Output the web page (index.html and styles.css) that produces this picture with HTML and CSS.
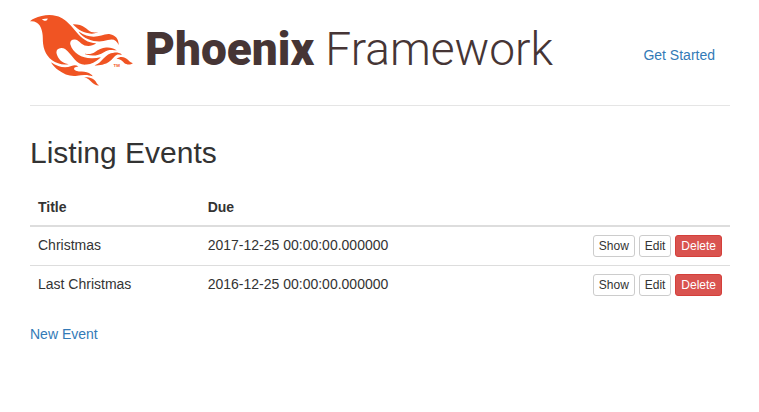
FILE: index.html
```html
<!DOCTYPE html>
<html lang="en">
<head>
<meta charset="utf-8">
<meta name="viewport" content="width=device-width, initial-scale=1">
<title>Events</title>
<link rel="stylesheet" href="styles.css">
</head>
<body>
<div class="container">
  <header class="header">
    <div class="logo">
      <svg class="bird" viewBox="0 0 71 49" aria-hidden="true">
        <path d="m26.371 33.477-.552-.1c-3.92-.729-6.397-3.1-7.57-6.829-.733-2.324.597-4.035 3.035-4.148 1.995-.092 3.362 1.055 4.57 2.39 1.557 1.72 2.984 3.558 4.514 5.305 2.202 2.515 4.797 4.134 8.347 3.634 3.183-.448 5.958-1.725 8.371-3.828.363-.316.761-.592 1.144-.886l-.241-.284c-2.027.63-4.093.841-6.205.735-3.195-.16-6.24-.828-8.964-2.582-2.486-1.601-4.319-3.746-5.19-6.611-.704-2.315.736-3.934 3.135-3.6.948.133 1.746.56 2.463 1.165.583.493 1.143 1.015 1.738 1.493 2.8 2.25 6.712 2.375 10.265-.068-5.842-.026-9.817-3.24-13.308-7.313-1.366-1.594-2.7-3.216-4.095-4.785-2.698-3.036-5.692-5.71-9.79-6.623C12.8-.623 7.745.14 2.893 2.361 1.926 2.804.997 3.319 0 4.149c.494 0 .763.006 1.032 0 2.446-.064 4.28 1.023 5.602 3.024.962 1.457 1.415 3.104 1.761 4.798.513 2.515.247 5.078.544 7.605.761 6.494 4.08 11.026 10.26 13.346 2.267.852 4.591 1.135 7.172.555ZM10.751 3.852c-.976.246-1.756-.148-2.56-.962 1.377-.343 2.592-.476 3.897-.528-.107.848-.607 1.306-1.336 1.49Zm32.002 37.924c-.085-.626-.62-.901-1.04-1.228-1.857-1.446-4.03-1.958-6.333-2-1.375-.026-2.735-.128-4.031-.61-.595-.22-1.26-.505-1.244-1.272.015-.78.693-1 1.31-1.184.505-.15 1.026-.247 1.6-.382-1.46-.936-2.886-1.065-4.787-.3-2.993 1.202-5.943 1.06-8.926-.017-1.684-.608-3.179-1.563-4.735-2.408l-.2-.05c1.29 2.115 3.156 3.924 5.126 5.378 3.793 2.8 7.936 4.471 12.784 3.73A66.714 66.714 0 0 1 37 40.877c1.98-.16 3.866.398 5.753.899Zm-9.14-30.345c-.105-.076-.206-.266-.42-.069 1.745 2.36 3.985 4.098 6.683 5.193 4.354 1.767 8.773 2.07 13.293.51 3.51-1.21 6.033-.028 7.343 3.38.19-3.955-2.137-6.837-5.843-7.401-2.084-.318-4.01.373-5.962.94-5.434 1.575-10.485.798-15.094-2.553Zm27.085 15.425c.708.059 1.416.123 2.124.185-1.6-1.405-3.55-1.517-5.523-1.404-3.003.17-5.167 1.903-7.14 3.972-1.739 1.824-3.31 3.87-5.903 4.604.043.078.054.117.066.117.35.005.699.021 1.047.005 3.768-.17 7.317-.965 10.14-3.7.89-.86 1.685-1.817 2.544-2.71.716-.746 1.584-1.159 2.645-1.07Zm-8.753-4.67c-2.812.246-5.254 1.409-7.548 2.943-1.766 1.18-3.654 1.738-5.776 1.37-.374-.066-.75-.114-1.124-.17l-.013.156c.135.07.265.151.405.207.354.14.702.308 1.07.395 4.083.971 7.992.474 11.516-1.803 2.221-1.435 4.521-1.707 7.013-1.336.252.038.503.083.756.107.234.022.479.255.795.003-2.179-1.574-4.526-2.096-7.094-1.872Zm-10.049-9.544c1.475.051 2.943-.142 4.486-1.059-.452.04-.643.04-.827.076-2.126.424-4.033-.04-5.733-1.383-.623-.493-1.257-.974-1.889-1.457-2.503-1.914-5.374-2.555-8.514-2.5.05.154.054.26.108.315 3.417 3.455 7.371 5.836 12.369 6.008Zm24.727 17.731c-2.114-2.097-4.952-2.367-7.578-.537 1.738.078 3.043.632 4.101 1.728.374.388.763.768 1.182 1.106 1.6 1.29 4.311 1.352 5.896.155-1.861-.726-1.861-.726-3.601-2.452Zm-21.058 16.06c-1.858-3.46-4.981-4.24-8.59-4.008a9.667 9.667 0 0 1 2.977 1.39c.84.586 1.547 1.311 2.243 2.055 1.38 1.473 3.534 2.376 4.962 2.07-.656-.412-1.238-.848-1.592-1.507Z"/>
        <text x="57" y="35.5">TM</text>
      </svg>
      <span class="wordmark"><strong>Phoenix</strong> Framework</span>
    </div>
    <nav><a href="#">Get Started</a></nav>
  </header>
  <main>
    <h2>Listing Events</h2>
    <table>
      <thead>
        <tr><th>Title</th><th>Due</th><th></th></tr>
      </thead>
      <tbody>
        <tr>
          <td>Christmas</td>
          <td>2017-12-25 00:00:00.000000</td>
          <td class="actions"><a class="btn" href="#">Show</a> <a class="btn" href="#">Edit</a> <button class="btn danger" type="button">Delete</button></td>
        </tr>
        <tr>
          <td>Last Christmas</td>
          <td>2016-12-25 00:00:00.000000</td>
          <td class="actions"><a class="btn" href="#">Show</a> <a class="btn" href="#">Edit</a> <button class="btn danger" type="button">Delete</button></td>
        </tr>
      </tbody>
    </table>
    <a href="#">New Event</a>
  </main>
</div>
</body>
</html>
```
FILE: styles.css
```css
* { box-sizing: border-box; }
body {
  margin: 0;
  background: #fff;
  color: #333;
  font: 14px/20px "Liberation Sans", Arial, sans-serif;
}
a { color: #337ab7; text-decoration: none; }
.container { max-width: 760px; margin: 0 auto; padding: 0 29px 0 30px; }
.header {
  display: flex;
  align-items: center;
  justify-content: space-between;
  height: 106px;
  margin-bottom: 30px;
  padding-right: 15px;
  border-bottom: 1px solid #e5e5e5;
}
.header nav { padding-top: 5px; }
.logo { display: flex; align-items: center; gap: 11px; padding-bottom: 4px; }
.bird { width: 104px; height: 72px; fill: #f05423; }
.bird text { font: bold 3px "Liberation Sans", Arial, sans-serif; }
.wordmark {
  padding-bottom: 4px;
  color: #463535;
  font-family: Roboto, "Liberation Sans", sans-serif;
  font-size: 46px;
  font-weight: 350;
  line-height: 60px;
  white-space: nowrap;
}
.wordmark strong { font-weight: 900; }
h2 { margin: 0 0 19px; font-size: 30px; font-weight: normal; line-height: 34px; }
table { width: 100%; margin-bottom: 20px; border-collapse: collapse; }
th, td { padding: 8px; text-align: left; vertical-align: top; }
th { border-bottom: 2px solid #ddd; }
td { border-top: 1px solid #ddd; }
.actions { line-height: 16px; text-align: right; white-space: nowrap; }
.btn {
  display: inline-block;
  padding: 1px 5px;
  border: 1px solid #ccc;
  border-radius: 3px;
  background: #fff;
  color: #333;
  font: 12px/18px "Liberation Sans", Arial, sans-serif;
  vertical-align: middle;
}
.danger { background: #d9534f; border-color: #d43f3a; color: #fff; }
```
